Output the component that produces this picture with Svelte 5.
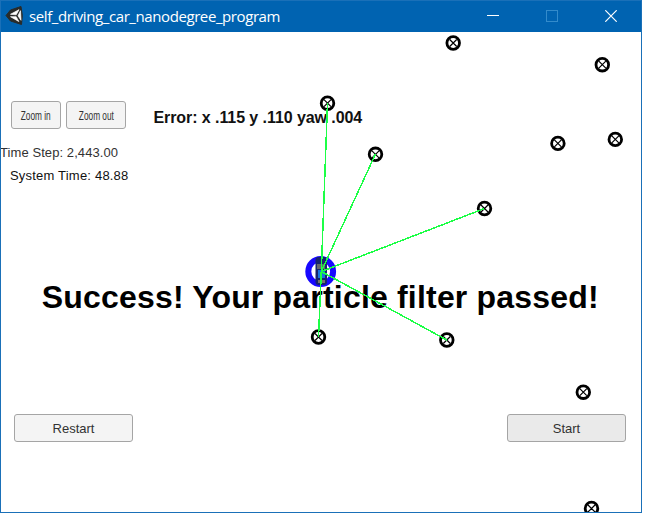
<script>
  const landmarks = [
    [453.2, 43], [602.3, 64.7], [327.5, 103.2], [375.5, 154.3], [484.5, 208.5], [557.9, 143.4],
    [615.3, 139.4], [318.5, 337], [446.8, 340], [583.3, 392.2], [591.5, 508.5]
  ];
  const sensed = [
    [327.5, 103], [375.5, 154], [484.5, 208.5], [446.8, 340], [318.5, 337]
  ];
</script>

<div class="window">
  <header>
    <svg class="logo" width="20" height="22" viewBox="0 0 20 22">
      <path d="M1 10.5 5.5 5 16 1.5 17.3 10.5 16.5 19.5 5.5 16Z" fill="#292b29" stroke="#292b29" />
      <path d="M5.5 9.3 14 4.7 11.2 9.8ZM5.5 11.7 11.2 11.7 13.8 16.5ZM15.5 5.7 16 15.3 13 10.8Z" fill="#fff" stroke="#fff" stroke-width=".7" />
    </svg>
    <span class="title">self_driving_car_nanodegree_program</span>
    <nav>
      <svg width="12" height="12"><path d="M0 5.5H12" stroke="#fff" /></svg>
      <svg width="12" height="12"><rect x=".5" y=".5" width="11" height="11" fill="none" stroke="#338bcb" /></svg>
      <svg width="12" height="12"><path d="M.3.3 11.7 11.7M11.7.3.3 11.7" stroke="#fff" stroke-width="1.2" /></svg>
    </nav>
  </header>

  <main>
    <div class="tools">
      <button class="zin"><span>Zoom in</span></button>
      <button class="zout"><span>Zoom out</span></button>
      <strong class="error">Error: x .115 y .110 yaw .004</strong>
    </div>
    <p class="step">Time Step: 2,443.00</p>
    <p class="system">System Time: 48.88</p>
    <h1>Success! Your particle filter passed!</h1>
    <div class="actions">
      <button>Restart</button>
      <button class="start">Start</button>
    </div>

    <svg class="map" viewBox="1 32 640 480" width="640" height="480">
      <g fill="none" stroke="#000">
        {#each landmarks as [x, y]}
          <circle cx={x} cy={y} r="6.3" stroke-width="2.8" />
          <path d="M{x - 3.5} {y - 3.5}l7 7m0-7l-7 7" stroke-width="1.2" />
        {/each}
      </g>
      <circle cx="320.7" cy="271.5" r="12.4" fill="none" stroke="#1808ff" stroke-width="6" />
      <g class="car">
        <rect x="315.5" y="257" width="11.5" height="28" rx="3" fill="#17246e" />
        <rect x="317" y="264" width="8" height="5" fill="#65666c" />
        <rect x="318" y="270" width="7" height="8" fill="#1774df" />
        <rect x="318" y="280" width="7" height="3" fill="#77736c" />
      </g>
      <g stroke="#1cff46" stroke-width="1.5" shape-rendering="crispEdges">
        {#each sensed as [x, y]}
          <line x1="321.3" y1="271.5" x2={x} y2={y} />
        {/each}
      </g>
    </svg>
  </main>
</div>

<style>
  :global(body) { background: #fff; }
  .window {
    box-sizing: border-box;
    width: 642px;
    height: 513px;
    border: 1px solid #1a70b8;
    font-family: "Liberation Sans", Arial, sans-serif;
    color: #323232;
  }
  header {
    display: flex;
    align-items: center;
    height: 31px;
    padding: 0 24px 0 4px;
    background: #0063b1;
  }
  .logo { margin: -2px 4px 0 0; }
  .title {
    font: 15px/20px "Open Sans", "Noto Sans", sans-serif;
    letter-spacing: -0.41px;
    color: #fff;
    white-space: nowrap;
    margin-top: -1px;
  }
  nav { display: flex; gap: 46px; margin: -1px 0 0 auto; }
  nav svg { display: block; }
  nav svg:first-child { margin-right: 1px; }
  nav svg:last-child { margin-left: 1px; }
  main {
    position: relative;
    display: flex;
    flex-direction: column;
    height: 480px;
    overflow: hidden;
    background: #fff;
  }
  .tools { display: flex; align-items: center; margin: 69px 0 0 10px; height: 28px; }
  button {
    box-sizing: border-box;
    height: 28px;
    padding: 0;
    border: 1px solid #a5a5a5;
    border-radius: 3px;
    background: #f4f4f4;
    color: #323232;
    font: 13px "Liberation Sans", Arial, sans-serif;
    white-space: nowrap;
  }
  .zin { width: 50px; margin-right: 5px; }
  .zout { width: 60px; }
  .tools button span { display: inline-block; margin: 0 -8px; font-size: 12px; transform: scaleX(0.69); }
  .error { margin: 5px 0 0 27.4px; font-size: 16px; line-height: 18px; letter-spacing: -0.07px; color: #111; white-space: nowrap; }
  p { margin: 0; font-size: 13px; line-height: 16px; letter-spacing: 0.2px; white-space: nowrap; }
  .step { margin: 16px 0 0 -1px; letter-spacing: 0.08px; }
  .system { margin: 7px 0 0 9px; color: #111; }
  h1 { margin: 94px 0 0 40.7px; font-size: 32px; line-height: 38px; letter-spacing: 0.19px; color: #000; white-space: nowrap; }
  .actions { display: flex; justify-content: space-between; margin: 98px 15px 0 13px; }
  .actions button { width: 119px; }
  .actions .start { background: #eaeaea; }
  .map { position: absolute; inset: 0; pointer-events: none; }
</style>
